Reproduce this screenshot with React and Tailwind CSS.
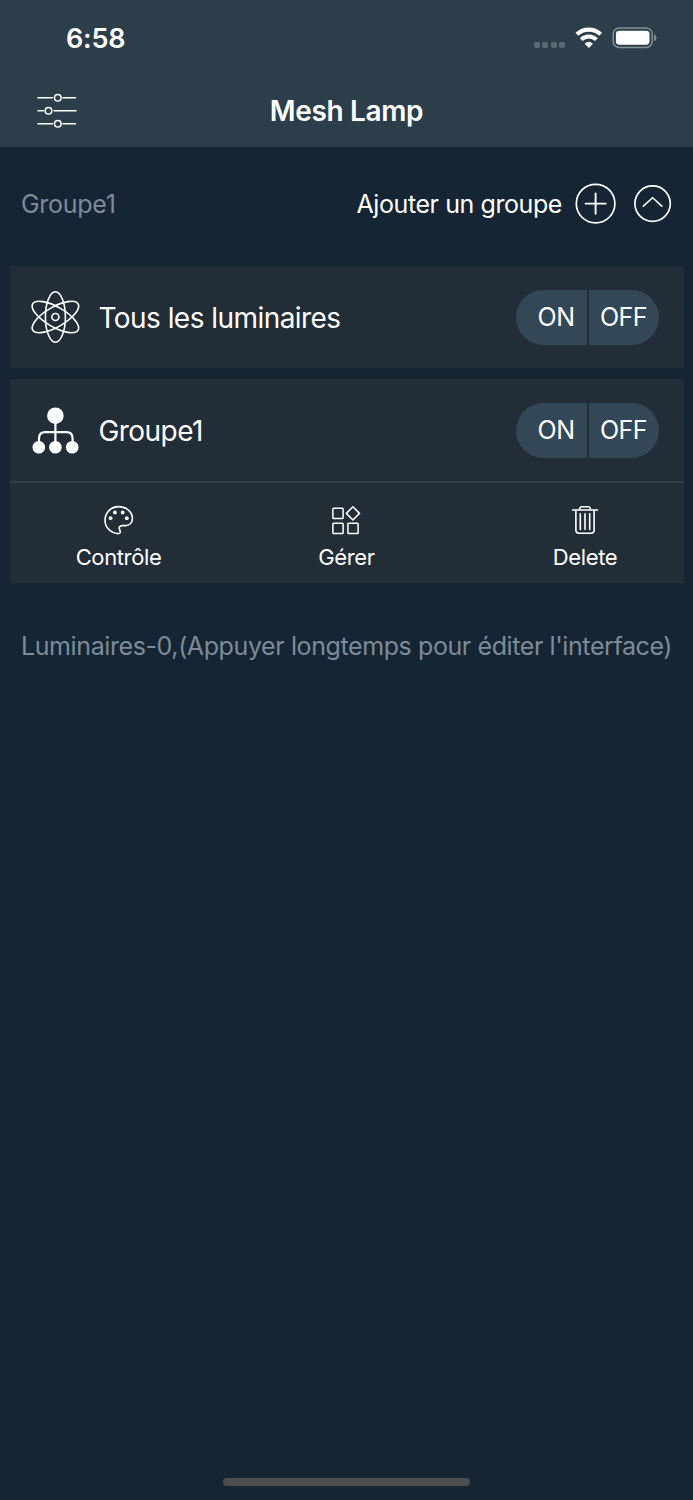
import React from 'react';

const SlidersIcon = () => (
  <svg width="40" height="36" viewBox="0 0 40 36" fill="none" stroke="#fff" strokeWidth="1.5" strokeLinecap="round">
    <path d="M1 4.7H15.5M26 4.7H38.5M1 17.7H6.3M17 17.7H39M1 30.7H15.5M26 30.7H38.5" />
    <circle cx="20.8" cy="4.7" r="3.3" />
    <circle cx="11.5" cy="17.7" r="3.3" />
    <circle cx="20.8" cy="30.7" r="3.3" />
  </svg>
);

const WifiIcon = () => (
  <svg width="28" height="22" viewBox="0 0 28 22" fill="none" stroke="#fff">
    <path d="M1.9 7.3A17.4 17.4 0 0 1 25.7 7.3" strokeWidth="4.2" />
    <path d="M6.2 12.6A10.9 10.9 0 0 1 21.4 12.6" strokeWidth="4" />
    <path d="M9.7 16.7Q13.8 12.9 17.9 16.7L13.8 21Z" fill="#fff" stroke="none" />
  </svg>
);

const BatteryIcon = () => (
  <svg width="46" height="22" viewBox="0 0 46 22" fill="none">
    <rect x="1.2" y="1" width="39" height="19.4" rx="6" stroke="#84909a" strokeWidth="1.5" />
    <rect x="3.9" y="3.7" width="33.6" height="14" rx="3.4" fill="#fff" />
    <path d="M42.2 7.2C45.2 8.5 45.2 13 42.2 14.3Z" fill="#84909a" />
  </svg>
);

const PlusIcon = () => (
  <svg width="42" height="42" viewBox="0 0 42 42" fill="none" stroke="#fff" strokeWidth="1.7">
    <circle cx="20.6" cy="20.6" r="19.3" />
    <path d="M20.6 9.8V31.4M9.8 20.6H31.4" strokeWidth="1.9" />
  </svg>
);

const ChevronIcon = () => (
  <svg width="38" height="38" viewBox="0 0 38 38" fill="none" stroke="#fff" strokeWidth="1.7">
    <circle cx="18.6" cy="18.6" r="17.7" />
    <path d="M8.8 21.6L18.6 12.8L28.4 21.6" strokeWidth="1.5" />
  </svg>
);

const AtomIcon = () => (
  <svg width="52" height="54" viewBox="0 0 52 54" fill="none" stroke="#fff" strokeWidth="1.6">
    <ellipse cx="25.4" cy="27" rx="10" ry="25.2" />
    <ellipse cx="25.4" cy="27" rx="10" ry="26.2" transform="rotate(60 25.4 27)" />
    <ellipse cx="25.4" cy="27" rx="10" ry="26.2" transform="rotate(-60 25.4 27)" />
    <circle cx="25.4" cy="27" r="3.5" />
  </svg>
);

const TreeIcon = () => (
  <svg width="52" height="50" viewBox="0 0 52 50" fill="#fff">
    <path d="M25.4 12V42M9 42V33.5Q9 27.2 15.3 27.2H36.3Q42.6 27.2 42.6 33.5V42" fill="none" stroke="#fff" strokeWidth="2.2" />
    <circle cx="25.4" cy="10.7" r="8.3" />
    <circle cx="8.8" cy="42.2" r="6.3" />
    <circle cx="25.4" cy="42.2" r="6.3" />
    <circle cx="42.2" cy="42.2" r="6.3" />
  </svg>
);

const PaletteIcon = () => (
  <svg width="30" height="30" viewBox="0 0 30 30" fill="none" stroke="#fff" strokeWidth="1.6" strokeLinejoin="round">
    <path d="M14.6 1.6C22.4 1.6 28.4 6.9 28.4 13.4C28.4 18 25.3 20.6 21.2 20.6H18.2C15.5 20.6 14.7 22.3 15.6 24.5C16.1 25.7 16.5 26.6 16.3 27.4C16 28.7 14.5 28.7 13 28.5C6 27.6 1 22 1 15.3C1 7.6 7 1.6 14.6 1.6Z" />
    <g fill="#fff" stroke="none">
      <circle cx="6.6" cy="13.2" r="1.9" />
      <circle cx="10.9" cy="7.5" r="1.9" />
      <circle cx="18.7" cy="7.5" r="1.9" />
      <circle cx="22.8" cy="13.2" r="1.9" />
    </g>
  </svg>
);

const WidgetsIcon = () => (
  <svg width="30" height="30" viewBox="0 0 30 30" fill="none" stroke="#fff" strokeWidth="1.5" strokeLinejoin="round">
    <rect x="0.9" y="3.3" width="10.2" height="10.2" rx="0.8" />
    <rect x="0.9" y="18.3" width="10.2" height="10.2" rx="0.8" />
    <rect x="15.9" y="18.3" width="10.2" height="10.2" rx="0.8" />
    <path d="M20.9 1.8L27.5 8.4L20.9 15L14.3 8.4Z" />
  </svg>
);

const TrashIcon = () => (
  <svg width="28" height="30" viewBox="0 0 28 30" fill="none" stroke="#fff" strokeWidth="1.6" strokeLinecap="round">
    <path d="M1.5 5H26.5M8.3 4.8L9 2.8Q9.3 1.8 10.5 1.8H17.5Q18.7 1.8 19 2.8L19.7 4.8" />
    <path d="M4.9 5.3V25.3Q4.9 28.2 7.8 28.2H20.2Q23.1 28.2 23.1 25.3V5.3" />
    <path d="M9.3 8.8V24.5M14 8.8V24.5M18.7 8.8V24.5" />
  </svg>
);

const OnOff = () => (
  <div className="grid h-[55px] w-[143px] grid-cols-[71px_70px] gap-[2px] overflow-hidden rounded-full text-[25px] tracking-[-0.5px]">
    <button className="flex items-center justify-center bg-[#334757] pt-[2px] pl-[10px]">ON</button>
    <button className="flex items-center justify-center bg-[#334757] pt-[2px]">OFF</button>
  </div>
);

const LampRow = ({ icon, name }) => (
  <div className="flex h-[102px] items-center pr-[25px] pl-5">
    {icon}
    <span className="mt-[1px] ml-[17px] flex-1 text-[28px] tracking-[-0.55px]">{name}</span>
    <OnOff />
  </div>
);

const Action = ({ icon, label, className }) => (
  <button className={`flex flex-col items-center ${className}`}>
    {icon}
    <span className="mt-[7px] text-[22px] leading-[30px] tracking-[-0.38px]">{label}</span>
  </button>
);

export default function App() {
  return (
    <div className="flex h-[1500px] w-[693px] flex-col bg-[#152533] font-['Inter',sans-serif] text-white">
      <header className="h-[147px] bg-[#2d3e4b]">
        <div className="flex h-[76px] items-center justify-between pr-[35px] pl-[66px]">
          <span className="mt-[2px] text-[27px] font-semibold tracking-[-0.2px]">6:58</span>
          <div className="flex items-center">
            <div className="mt-[14px] mr-[10px] flex gap-[2.4px]">
              {[0, 1, 2, 3].map((i) => (
                <span key={i} className="h-[6px] w-[6px] rounded-[2px] bg-[#5c6973]" />
              ))}
            </div>
            <WifiIcon />
            <span className="ml-[9px]"><BatteryIcon /></span>
          </div>
        </div>
        <div className="grid h-[70px] grid-cols-[1fr_auto_1fr] items-center px-[37px]">
          <SlidersIcon />
          <h1 className="text-[28px] font-semibold tracking-[-0.35px]">Mesh Lamp</h1>
        </div>
      </header>

      <div className="flex h-[114px] items-center px-[21px] text-[25px]">
        <span className="mt-[2px] flex-1 tracking-[-0.3px] text-[#7d8b98]">Groupe1</span>
        <span className="mt-[2px] tracking-[-0.42px]">Ajouter un groupe</span>
        <span className="ml-[13px]"><PlusIcon /></span>
        <span className="ml-[17px]"><ChevronIcon /></span>
      </div>

      <main className="mx-[9.5px] mt-[5px]">
        <section className="bg-[#222d38]">
          <LampRow icon={<AtomIcon />} name="Tous les luminaires" />
        </section>
        <section className="mt-[11px] bg-[#222d38]">
          <LampRow icon={<TreeIcon />} name="Groupe1" />
          <div className="flex h-[102px] border-t-2 border-[#303d49] pt-[22px] pr-[66px] pl-[66px]">
            <Action className="w-[86px]" icon={<PaletteIcon />} label="Contrôle" />
            <Action className="ml-[156px] w-[58px]" icon={<WidgetsIcon />} label="Gérer" />
            <Action className="ml-auto w-[65px]" icon={<TrashIcon />} label="Delete" />
          </div>
        </section>
      </main>

      <p className="mt-[45px] pl-[21px] text-[25px] leading-9 tracking-[-0.4px] whitespace-nowrap text-[#7d8b98]">
        Luminaires-0,(Appuyer longtemps pour éditer l'interface)
      </p>

      <div className="mx-auto mt-auto mb-[14px] h-[8px] w-[247px] rounded-full bg-[#4d4d4d]" />
    </div>
  );
}
